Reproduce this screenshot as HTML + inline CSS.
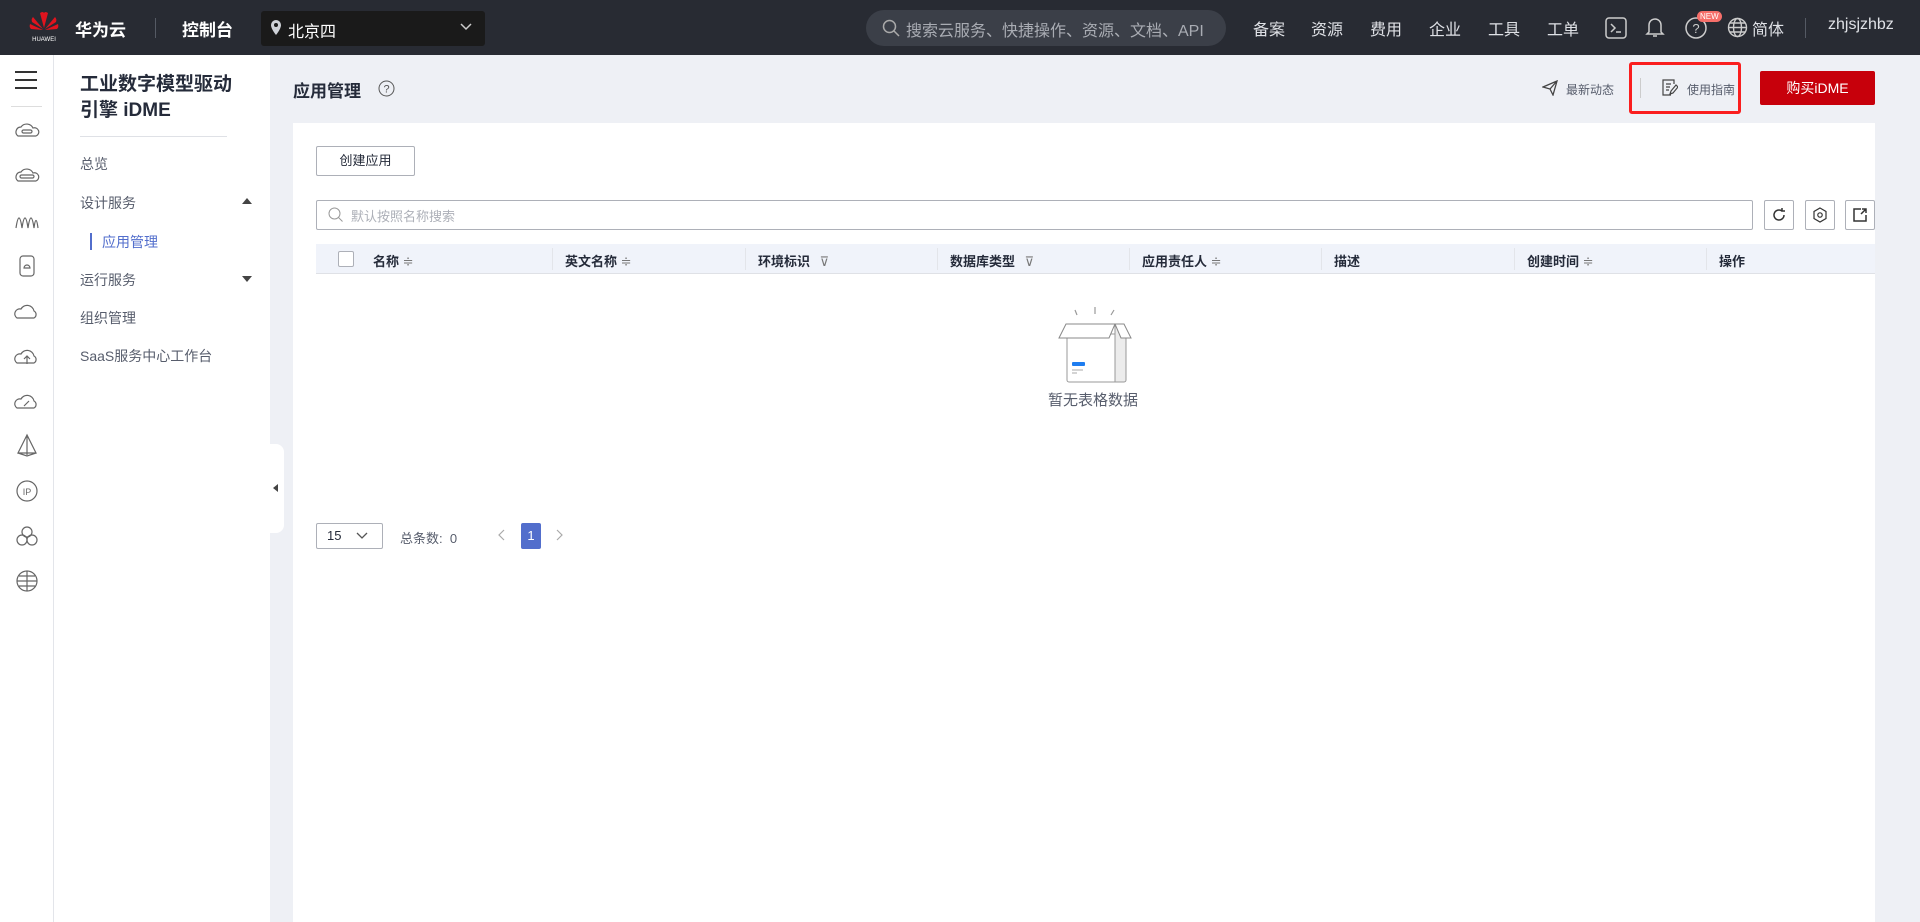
<!DOCTYPE html>
<html><head><meta charset="utf-8"><style>
*{box-sizing:border-box;margin:0;padding:0}
body{width:1920px;height:922px;overflow:hidden;font-family:"Liberation Sans","Noto Sans CJK SC",sans-serif;background:#eef0f5;position:relative;color:#252b3a}
.abs{position:absolute}
.top{left:0;top:0;width:1920px;height:55px;background:#282b33;color:#fff}
.nav{top:16px;font-size:16px;color:#dfe1e6}
.rail{left:0;top:55px;width:54px;height:867px;background:#fff;border-right:1px solid #e3e5ea}
.side{left:54px;top:55px;width:216px;height:867px;background:#fff}
.si{left:80px;font-size:14px;color:#575d6c}
.card{left:293px;top:123px;width:1582px;height:799px;background:#fff}
.th{top:244px;height:30px;background:#f0f3fa;border-bottom:1px solid #dfe1e6}
.thc{top:251px;font-size:13px;font-weight:bold;color:#252b3a}
.ib{top:200px;width:30px;height:30px;border:1px solid #adb0b8;border-radius:2px;background:#fff}
</style></head><body>
<div class="abs top"></div>
<svg class="abs" style="left:28px;top:10px" width="32" height="34" viewBox="0 0 32 34">
<g fill="#e0141e"><path d="M16 18 L12 3 Q15 1 16 3Z"/><path d="M16 18 L20 3 Q17 1 16 3Z"/><path d="M15 19 L5 7 Q3 9 4 12Z"/><path d="M17 19 L27 7 Q29 9 28 12Z"/><path d="M15 20 L2 14 Q1 17 3 19Z"/><path d="M17 20 L30 14 Q31 17 29 19Z"/></g>
<text x="16" y="31" font-size="6" fill="#fff" text-anchor="middle" font-family="Liberation Sans">HUAWEI</text></svg>
<div class="abs" style="left:75px;top:16px;font-size:17px;font-weight:bold;color:#fff">华为云</div>
<div class="abs" style="left:155px;top:18px;width:1px;height:20px;background:#555a64"></div>
<div class="abs" style="left:182px;top:16px;font-size:17px;font-weight:bold;color:#fff">控制台</div>
<div class="abs" style="left:261px;top:11px;width:224px;height:35px;background:#1a1a1a;border-radius:3px"></div>
<svg class="abs" style="left:270px;top:19px" width="12" height="17" viewBox="0 0 12 17"><path d="M6 1a5 5 0 0 0-5 5c0 4 5 10 5 10s5-6 5-10a5 5 0 0 0-5-5z" fill="#cfd2d8"/><circle cx="6" cy="6" r="2" fill="#1a1a1a"/></svg>
<div class="abs" style="left:288px;top:18px;font-size:16px;color:#fff">北京四</div>
<svg class="abs" style="left:460px;top:23px" width="12" height="8"><path d="M1 1l5 5 5-5" stroke="#ccc" fill="none" stroke-width="1.5"/></svg>
<div class="abs" style="left:866px;top:10px;width:360px;height:36px;background:#3b3f48;border-radius:18px"></div>
<svg class="abs" style="left:882px;top:19px" width="18" height="18"><circle cx="7.5" cy="7.5" r="6" stroke="#aaa" fill="none" stroke-width="1.5"/><path d="M12 12l5 5" stroke="#aaa" stroke-width="1.5"/></svg>
<div class="abs" style="left:906px;top:17px;font-size:16px;color:#a9acb3">搜索云服务、快捷操作、资源、文档、API</div>
<div class="abs nav" style="left:1253px">备案</div>
<div class="abs nav" style="left:1311px">资源</div>
<div class="abs nav" style="left:1370px">费用</div>
<div class="abs nav" style="left:1429px">企业</div>
<div class="abs nav" style="left:1488px">工具</div>
<div class="abs nav" style="left:1547px">工单</div>
<svg class="abs" style="left:1605px;top:17px" width="22" height="22"><rect x="1" y="1" width="20" height="20" rx="3" stroke="#ccc" fill="none" stroke-width="1.5"/><path d="M6 7l4 4-4 4M11 15h5" stroke="#ccc" fill="none" stroke-width="1.5"/></svg>
<svg class="abs" style="left:1645px;top:15px" width="20" height="24"><path d="M4 17V10a6 6 0 0 1 12 0v7l2 2H2z M8 21h4" stroke="#ccc" fill="none" stroke-width="1.5"/></svg>
<svg class="abs" style="left:1685px;top:16px" width="24" height="24"><circle cx="11" cy="12" r="10" stroke="#ccc" fill="none" stroke-width="1.5"/><text x="11" y="17" font-size="13" fill="#ccc" text-anchor="middle" font-family="Liberation Sans">?</text></svg>
<div class="abs" style="left:1697px;top:11px;background:#f66f6a;color:#fff;font-size:8px;padding:0 3px;border-radius:6px;line-height:11px">NEW</div>
<svg class="abs" style="left:1727px;top:17px" width="21" height="21" viewBox="0 0 21 21"><g stroke="#ccc" fill="none" stroke-width="1.4"><circle cx="10.5" cy="10.5" r="9"/><ellipse cx="10.5" cy="10.5" rx="4" ry="9"/><path d="M1.5 10.5h18M3 6h15M3 15h15"/></g></svg>
<div class="abs nav" style="left:1752px">简体</div>
<div class="abs" style="left:1805px;top:18px;width:1px;height:20px;background:#555a64"></div>
<div class="abs nav" style="left:1828px">zhjsjzhbz</div>

<div class="abs rail"></div>
<div class="abs" style="left:15px;top:71px;width:22px;height:2px;background:#333"></div>
<div class="abs" style="left:15px;top:79px;width:22px;height:2px;background:#333"></div>
<div class="abs" style="left:15px;top:87px;width:22px;height:2px;background:#333"></div>
<div class="abs" style="left:11px;top:106px;width:31px;height:1px;background:#ddd"></div>
<svg class="abs" style="left:14px;top:118px" width="26" height="480" viewBox="0 0 26 480" fill="none" stroke="#666" stroke-width="1.2">
<path d="M4 18a5 5 0 0 1 3-9a7 7 0 0 1 12 1a4 4 0 0 1 3 8z"/><rect x="8" y="12" width="10" height="3" rx="1.5"/>
<g transform="translate(0,45)"><path d="M4 18a5 5 0 0 1 3-9a7 7 0 0 1 12 1a4 4 0 0 1 3 8z"/><rect x="6" y="12" width="14" height="3" rx="1.5"/></g>
<g transform="translate(0,90)"><path d="M2 20 Q5 0 8 20 Q11 0 14 20 Q17 0 20 20 Q22 5 24 20"/></g>
<g transform="translate(0,135)"><rect x="6" y="3" width="14" height="20" rx="3"/><path d="M10 15a2 2 0 0 1 6 0z"/></g>
<g transform="translate(0,180)"><path d="M3 20a5 5 0 0 1 4-9a7 7 0 0 1 13 2a4 4 0 0 1 0 7z"/></g>
<g transform="translate(0,225)"><path d="M3 20a5 5 0 0 1 4-9a7 7 0 0 1 13 2a4 4 0 0 1 0 7z M13 21v-8m-3 3l3-3 3 3"/></g>
<g transform="translate(0,270)"><path d="M3 20a5 5 0 0 1 4-9a7 7 0 0 1 13 2a4 4 0 0 1 0 7z M10 18l5-5"/></g>
<g transform="translate(0,315)"><path d="M13 2L4 20h18z M13 2v20 M4 20l9 3 9-3"/></g>
<g transform="translate(0,360)"><circle cx="13" cy="13" r="10"/><text x="13" y="17" font-size="9" fill="#666" stroke="none" text-anchor="middle">IP</text></g>
<g transform="translate(0,405)"><circle cx="13" cy="9" r="5"/><circle cx="8" cy="17" r="5"/><circle cx="18" cy="17" r="5"/></g>
<g transform="translate(0,450)"><circle cx="13" cy="13" r="10"/><path d="M3 13h20M13 3v20M5 8h16M5 18h16"/></g>
</svg>

<div class="abs side"></div>
<div class="abs" style="left:80px;top:72px;font-size:19px;font-weight:bold;line-height:26px;color:#252b3a">工业数字模型驱动<br>引擎 iDME</div>
<div class="abs" style="left:80px;top:136px;width:147px;height:1px;background:#dfe1e6"></div>
<div class="abs si" style="top:154px">总览</div>
<div class="abs si" style="top:193px">设计服务</div>
<div class="abs" style="left:242px;top:198px;border:5px solid transparent;border-bottom:6px solid #444;border-top:0"></div>
<div class="abs" style="left:90px;top:233px;width:2px;height:17px;background:#526ecc"></div>
<div class="abs si" style="left:102px;top:232px;color:#526ecc">应用管理</div>
<div class="abs si" style="top:270px">运行服务</div>
<div class="abs" style="left:242px;top:276px;border:5px solid transparent;border-top:6px solid #444;border-bottom:0"></div>
<div class="abs si" style="top:308px">组织管理</div>
<div class="abs si" style="top:346px">SaaS服务中心工作台</div>
<div class="abs" style="left:270px;top:444px;width:14px;height:89px;background:#fff;border-radius:0 8px 8px 0"></div>
<div class="abs" style="left:273px;top:484px;border:4px solid transparent;border-right:5px solid #444;border-left:0"></div>

<div class="abs" style="left:293px;top:77px;font-size:17px;font-weight:bold">应用管理</div>
<svg class="abs" style="left:378px;top:80px" width="17" height="17"><circle cx="8.5" cy="8.5" r="7.5" stroke="#555" fill="none"/><text x="8.5" y="12.5" font-size="11" fill="#555" text-anchor="middle" font-family="Liberation Sans">?</text></svg>
<svg class="abs" style="left:1542px;top:80px" width="16" height="16"><path d="M1 7L15 1 11 15 8 9z M8 9l7-8" stroke="#444" fill="none" stroke-width="1.3"/></svg>
<div class="abs" style="left:1566px;top:81px;font-size:12px;color:#575d6c">最新动态</div>
<div class="abs" style="left:1640px;top:78px;width:1px;height:20px;background:#ccc"></div>
<svg class="abs" style="left:1661px;top:78px" width="17" height="18"><path d="M13 6V2H2v15h8 M5 6h5M5 9h4M5 12h3 M9 16l1-3 5-6 2 2-5 6z" stroke="#444" fill="none" stroke-width="1.2"/></svg>
<div class="abs" style="left:1687px;top:81px;font-size:12px;color:#575d6c">使用指南</div>
<div class="abs" style="left:1629px;top:62px;width:112px;height:52px;border:3px solid #fa1e1e;border-radius:3px"></div>
<div class="abs" style="left:1760px;top:71px;width:115px;height:34px;background:#c7000b;border-radius:2px;color:#fff;font-size:14px;text-align:center;line-height:34px">购买iDME</div>

<div class="abs card"></div>
<div class="abs" style="left:316px;top:146px;width:99px;height:30px;border:1px solid #adb0b8;border-radius:2px;font-size:13px;text-align:center;line-height:28px;background:#fff">创建应用</div>
<div class="abs" style="left:316px;top:200px;width:1437px;height:30px;border:1px solid #adb0b8;border-radius:2px;background:#fff"></div>
<svg class="abs" style="left:328px;top:207px" width="16" height="16"><circle cx="6.5" cy="6.5" r="5.5" stroke="#999" fill="none"/><path d="M10.5 10.5l4 4" stroke="#999"/></svg>
<div class="abs" style="left:351px;top:206px;font-size:13px;color:#adb0b8">默认按照名称搜索</div>
<div class="abs ib" style="left:1764px"></div>
<svg class="abs" style="left:1771px;top:207px" width="16" height="16"><path d="M13 8a5 5 0 1 1-2-4 M11 1v3h3" stroke="#333" fill="none" stroke-width="1.5"/></svg>
<div class="abs ib" style="left:1805px"></div>
<svg class="abs" style="left:1812px;top:207px" width="16" height="16"><path d="M8 1l6 3.5v7L8 15l-6-3.5v-7z" stroke="#333" fill="none" stroke-width="1.2"/><circle cx="8" cy="8" r="2.2" stroke="#333" fill="none" stroke-width="1.2"/></svg>
<div class="abs ib" style="left:1845px"></div>
<svg class="abs" style="left:1852px;top:207px" width="16" height="16"><path d="M9 2H2v12h12V8 M10 2h4v4 M14 2L9 7" stroke="#333" fill="none" stroke-width="1.5"/></svg>

<div class="abs th" style="left:316px;width:1559px"></div>
<div class="abs" style="left:338px;top:251px;width:16px;height:16px;border:1px solid #adb0b8;border-radius:2px;background:#fff"></div>
<div class="abs" style="left:552px;top:248px;width:1px;height:22px;background:#e3e5ea"></div>
<div class="abs" style="left:745px;top:248px;width:1px;height:22px;background:#e3e5ea"></div>
<div class="abs" style="left:937px;top:248px;width:1px;height:22px;background:#e3e5ea"></div>
<div class="abs" style="left:1129px;top:248px;width:1px;height:22px;background:#e3e5ea"></div>
<div class="abs" style="left:1321px;top:248px;width:1px;height:22px;background:#e3e5ea"></div>
<div class="abs" style="left:1514px;top:248px;width:1px;height:22px;background:#e3e5ea"></div>
<div class="abs" style="left:1706px;top:248px;width:1px;height:22px;background:#e3e5ea"></div>
<div class="abs thc" style="left:373px">名称 <span style="color:#777;font-weight:normal">≑</span></div>
<div class="abs thc" style="left:565px">英文名称 <span style="color:#777;font-weight:normal">≑</span></div>
<div class="abs thc" style="left:758px">环境标识 <span style="color:#777;font-weight:normal;margin-left:6px">⊽</span></div>
<div class="abs thc" style="left:950px">数据库类型 <span style="color:#777;font-weight:normal;margin-left:6px">⊽</span></div>
<div class="abs thc" style="left:1142px">应用责任人 <span style="color:#777;font-weight:normal">≑</span></div>
<div class="abs thc" style="left:1334px">描述</div>
<div class="abs thc" style="left:1527px">创建时间 <span style="color:#777;font-weight:normal">≑</span></div>
<div class="abs thc" style="left:1719px">操作</div>

<svg class="abs" style="left:1050px;top:302px" width="90" height="82" viewBox="0 0 90 82">
<path d="M27 13l-2-5 M45 12V5 M61 13l3-5" stroke="#999" stroke-width="1.2"/>
<path d="M17 32h48v48H19a2 2 0 0 1-2-2z" fill="#fff" stroke="#999"/>
<path d="M65 23v57h9a2 2 0 0 0 2-2V34z" fill="#ececec" stroke="#999"/>
<path d="M9 36l7-14h49l-6 14z" fill="#fff" stroke="#888"/>
<path d="M65 22l6 14h10l-7-14z" fill="#fff" stroke="#888"/>
<rect x="22" y="60" width="13" height="4" rx="1" fill="#1e7df0"/><path d="M22 68h11M22 71h5" stroke="#aaa"/>
</svg>
<div class="abs" style="left:1048px;top:389px;font-size:15px;color:#575d6c">暂无表格数据</div>

<div class="abs" style="left:316px;top:523px;width:67px;height:26px;border:1px solid #adb0b8;border-radius:2px;background:#fff"></div>
<div class="abs" style="left:327px;top:528px;font-size:13px">15</div>
<svg class="abs" style="left:356px;top:532px" width="12" height="8"><path d="M1 1l5 5 5-5" stroke="#555" fill="none" stroke-width="1.3"/></svg>
<div class="abs" style="left:400px;top:528px;font-size:13px;color:#575d6c">总条数:&nbsp; 0</div>
<svg class="abs" style="left:498px;top:529px" width="8" height="12"><path d="M6 1L1 6l5 5" stroke="#aaa" fill="none" stroke-width="1.2"/></svg>
<div class="abs" style="left:521px;top:523px;width:20px;height:26px;background:#526ecc;border-radius:2px;color:#fff;font-size:13px;text-align:center;line-height:26px">1</div>
<svg class="abs" style="left:555px;top:529px" width="8" height="12"><path d="M2 1l5 5-5 5" stroke="#aaa" fill="none" stroke-width="1.2"/></svg>
</body></html>
